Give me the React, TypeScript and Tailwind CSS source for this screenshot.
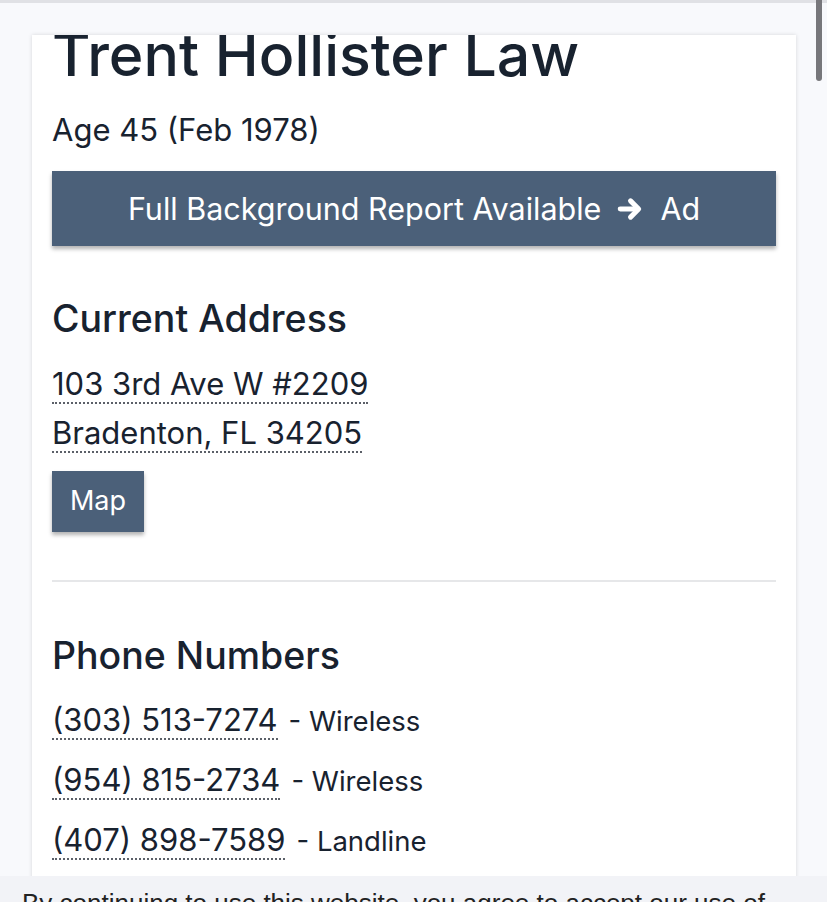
import React from "react";

const font = { fontFamily: "Inter, 'Noto Sans', sans-serif" };

function Dotted({ children }: { children: React.ReactNode }) {
  return (
    <span className="inline-block border-b-2 border-dotted border-[#5b6068] text-[31px] leading-[36px]">
      {children}
    </span>
  );
}

function Arrow() {
  return (
    <svg width="26" height="26" viewBox="0 0 24 24" fill="none" stroke="currentColor" strokeWidth="4.6" strokeLinecap="round" strokeLinejoin="round">
      <path d="M3 12h16" />
      <path d="M12.5 4.5L20 12l-7.5 7.5" />
    </svg>
  );
}

export default function App() {
  return (
    <div className="relative h-[902px] overflow-hidden bg-[#f8f9fc] text-[#18222f]" style={font}>
      <div className="h-[3px] bg-[#e0e1e5]" />
      <div className="mt-[32px] ml-[32px] w-[764px] bg-white shadow-[0_0_4px_rgba(0,0,0,0.14)] overflow-hidden h-[866px]">
        <div className="px-5">
          <h1 className="mt-[-10px] text-[59px] leading-[60px] font-medium whitespace-nowrap">Trent Hollister Law</h1>
          <p className="mt-[27px] text-[31px] leading-[36px]">Age 45 (Feb 1978)</p>
          <button className="mt-[23px] flex h-[75px] w-full items-center justify-center bg-[#4b6079] text-white text-[30.5px] shadow-[0_3px_4px_rgba(0,0,0,0.3)]">
            <span>Full Background Report Available</span>
            <span className="ml-[16px] mr-[17px] flex items-center"><Arrow /></span>
            <span>Ad</span>
          </button>
          <h2 className="mt-[51px] text-[37.5px] leading-[44px] font-medium">Current Address</h2>
          <div className="mt-[25px] flex flex-col items-start gap-[11px]">
            <Dotted>103 3rd Ave W #2209</Dotted>
            <Dotted>Bradenton, FL 34205</Dotted>
          </div>
          <button className="mt-[18px] flex h-[61px] w-[92px] items-center justify-center bg-[#4b6079] text-white text-[27px] shadow-[0_3px_4px_rgba(0,0,0,0.3)]">
            Map
          </button>
          <div className="mt-[48px] h-[2px] bg-[#e6e7e9]" />
          <h2 className="mt-[52px] text-[37.5px] leading-[44px] font-medium">Phone Numbers</h2>
          <div className="mt-[24px] flex flex-col gap-[22px]">
            {[
              ["(303) 513-7274", "Wireless"],
              ["(954) 815-2734", "Wireless"],
              ["(407) 898-7589", "Landline"],
            ].map(([n, t]) => (
              <div key={n} className="flex items-baseline">
                <Dotted>{n}</Dotted>
                <span className="ml-[11px] text-[27.5px] leading-[36px]">- {t}</span>
              </div>
            ))}
          </div>
        </div>
      </div>
      <div className="absolute right-[5px] top-0 h-[81px] w-[6px] rounded-b-full bg-[#77777b]" />
      <div className="fixed bottom-0 left-0 right-0 h-[26px] overflow-hidden bg-[#f2f3f7]">
        <p className="mt-[13px] pl-[22px] text-[26px] leading-[28px] text-[#222] whitespace-nowrap" style={{ fontFamily: "'Liberation Sans', Arial, sans-serif" }}>
          By continuing to use this website, you agree to accept our use of
        </p>
      </div>
    </div>
  );
}
